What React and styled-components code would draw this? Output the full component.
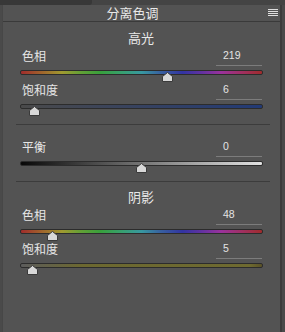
import React from "react"
import styled, { createGlobalStyle } from "styled-components"

const GlobalStyle = createGlobalStyle`
  html, body {
    margin: 0;
    padding: 0;
    background: #4a4a4a;
  }
  body {
    width: 285px;
    height: 332px;
    overflow: hidden;
    font-family: "Noto Sans CJK SC", "Noto Sans", sans-serif;
  }
`

const Frame = styled.div`
  height: 332px;
  display: flex;
  flex-direction: column;
  padding: 0 3px 0 2px;
  box-sizing: border-box;
`

const TopStrip = styled.div`
  height: 5px;
  display: flex;
  margin: 0 -3px 0 -2px;
  background: #444;
`

const Tab = styled.div`
  width: 92px;
  background: #383838;
  border-bottom-right-radius: 3px;
`

const Panel = styled.div`
  flex: 1;
  background: #535353;
  border-left: 1px solid #474747;
  border-right: 2px solid #3c3c3c;
`

const Header = styled.div`
  height: 16px;
  display: flex;
  align-items: center;
  border-bottom: 1px solid #3a3a3a;
`

const Title = styled.div`
  flex: 1;
  text-align: center;
  color: #e8e8e8;
  font-size: 13px;
  line-height: 14px;
`

const MenuButton = styled.div`
  width: 18px;
  display: flex;
  padding-left: 6px;
  box-sizing: border-box;
`

const Content = styled.div`
  padding: 0 10px 0 13px;
`

const SectionTitle = styled.div`
  text-align: center;
  color: #e8e8e8;
  font-size: 13px;
  line-height: 12px;
  padding-top: ${({ $top }) => $top}px;
  padding-right: 4px;
`

const Divider = styled.div`
  height: 1px;
  background: #3c3c3c;
  margin: 12px 0 ${({ $after }) => $after}px;
`

const Control = styled.div`
  height: 34px;
  padding: 0 7px 0 4px;
`

const LabelRow = styled.div`
  height: 22px;
  display: flex;
  justify-content: space-between;
`

const Label = styled.div`
  padding: 5px 0 0 2px;
  font-size: 12px;
  line-height: 14px;
  color: #e6e6e6;
`

const ValueBox = styled.div`
  width: 46px;
  height: 22px;
  box-sizing: border-box;
  margin-right: 1px;
  padding: 5px 0 0 7px;
  border-bottom: 1px solid #7c7c7c;
  font-family: "Liberation Sans", Arial, sans-serif;
  font-size: 10.5px;
  line-height: 12px;
  color: #e4e4e4;
`

const TrackRow = styled.div`
  position: relative;
  height: 12px;
`

const Track = styled.div`
  margin-top: 4px;
  height: 5px;
  box-sizing: border-box;
  border: 1px solid #2c2c2c;
  border-radius: 2px;
  background: ${({ $fill }) => $fill};
`

const ThumbMark = styled.svg`
  position: absolute;
  top: 2px;
  width: 11px;
  height: 10px;
  margin-left: -5.5px;
`

const fills = {
  hue: `linear-gradient(to right, #a02c2c, #a0602c 8%, #a09a30 17%, #62a036 25%, #38a03c 33%, #38a070 42%, #3898a0 50%, #3860a0 58%, #3234a2 67%, #6232a0 75%, #9a329c 83%, #a03060 92%, #a02c2c)`,
  highSat: `linear-gradient(to right, #4a4a4a, #223a76)`,
  balance: `linear-gradient(to right, #080808, #e2e2e2)`,
  shadowSat: `linear-gradient(to right, #5c5c5c, #6c6830 25%, #6e6a30 95%, #5a5228)`,
}

const Thumb = ({ pct }) => (
  <ThumbMark viewBox="0 0 11 10" style={{ left: `${pct}%` }}>
    <path d="M5.5 0.5 L10.5 4.5 V9.5 H0.5 V4.5 Z" fill="#d8d8d8" stroke="#3a3a3a" strokeWidth="1" />
  </ThumbMark>
)

const Slider = ({ label, value, pct, fill }) => (
  <Control>
    <LabelRow>
      <Label>{label}</Label>
      <ValueBox>{value}</ValueBox>
    </LabelRow>
    <TrackRow>
      <Track $fill={fill} />
      <Thumb pct={pct} />
    </TrackRow>
  </Control>
)

const MenuIcon = () => (
  <svg width="10" height="8" viewBox="0 0 10 8">
    {[0.5, 2.5, 4.5, 6.5].map((y) => (
      <rect key={y} x="0" y={y - 0.5} width="10" height="1" fill="#dedede" />
    ))}
  </svg>
)

const App = () => (
  <Frame>
    <GlobalStyle />
    <TopStrip>
      <Tab />
    </TopStrip>
    <Panel>
      <Header>
        <Title>分离色调</Title>
        <MenuButton>
          <MenuIcon />
        </MenuButton>
      </Header>
      <Content>
        <SectionTitle $top={10}>高光</SectionTitle>
        <Slider label="色相" value="219" pct={(219 / 360) * 100} fill={fills.hue} />
        <Slider label="饱和度" value="6" pct={6} fill={fills.highSat} />
        <Divider $after={10} />
        <Slider label="平衡" value="0" pct={50} fill={fills.balance} />
        <Divider $after={0} />
        <SectionTitle $top={9}>阴影</SectionTitle>
        <Slider label="色相" value="48" pct={(48 / 360) * 100} fill={fills.hue} />
        <Slider label="饱和度" value="5" pct={5} fill={fills.shadowSat} />
      </Content>
    </Panel>
  </Frame>
)

export default App
